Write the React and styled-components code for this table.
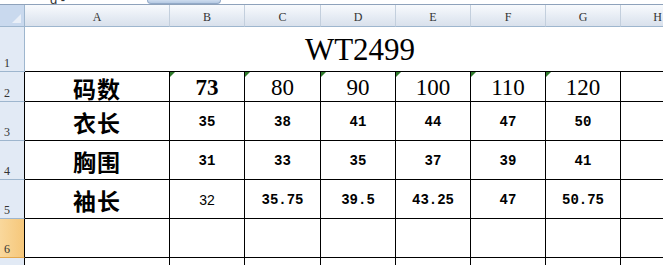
import styled, { createGlobalStyle } from 'styled-components';

const GlobalStyle = createGlobalStyle`
  html, body {
    margin: 0;
    padding: 0;
    background: #ffffff;
    overflow: hidden;
  }
`;

const columns = ['A', 'B', 'C', 'D', 'E', 'F', 'G', 'H'];
const sizes = ['73', '80', '90', '100', '110', '120'];
const rows = [
  { label: '衣长', values: ['35', '38', '41', '44', '47', '50'] },
  { label: '胸围', values: ['31', '33', '35', '37', '39', '41'] },
  { label: '袖长', values: ['32', '35.75', '39.5', '43.25', '47', '50.75'] },
];

export default function App() {
  return (
    <Window>
      <GlobalStyle />
      <TopStrip>
        <NameTail>g -</NameTail>
        <ScrollKnob />
      </TopStrip>
      <Sheet>
        <Corner />
        {columns.map((c) => (
          <ColHead key={c}>{c}</ColHead>
        ))}

        <RowHead>1</RowHead>
        <TitleCell>WT2499</TitleCell>

        <RowHead $boxed>2</RowHead>
        <LabelCell>码数</LabelCell>
        {sizes.map((s, i) => (
          <SizeCell key={s} $bold={i === 0}>
            <Flag />
            {s}
          </SizeCell>
        ))}
        <Cell />

        {rows.map((r, ri) => (
          <Row key={r.label} r={r} index={ri + 3} />
        ))}

        <RowHead $boxed $active>6</RowHead>
        {columns.map((c) => (
          <Cell key={c} />
        ))}

        {/* row 7: only its top edge is in view */}
        <RowHead $boxed />
        {columns.map((c) => (
          <Cell key={c} $open />
        ))}
      </Sheet>
    </Window>
  );
}

function Row({ r, index }) {
  return (
    <>
      <RowHead $boxed>{index}</RowHead>
      <LabelCell>{r.label}</LabelCell>
      {r.values.map((v, i) => (
        <ValueCell key={i} $plain={v === '32'}>
          {v}
        </ValueCell>
      ))}
      <Cell />
    </>
  );
}

const Window = styled.div`
  width: 663px;
  height: 265px;
  overflow: hidden;
  background: #ffffff;
`;

const TopStrip = styled.div`
  height: 5px;
  display: flex;
  align-items: flex-end;
  background: #ffffff;
  border-bottom: 1px solid #8ea2bb;
  box-sizing: border-box;
  overflow: hidden;
`;

const NameTail = styled.span`
  margin-left: 50px;
  margin-bottom: -2px;
  font: 13px 'Liberation Sans', sans-serif;
  line-height: 13px;
  color: #333;
`;

const ScrollKnob = styled.div`
  margin-left: 82px;
  align-self: flex-start;
  width: 74px;
  height: 4px;
  background: linear-gradient(#cddcef, #b6cae3);
  border: 1px solid #93aac8;
  border-top: none;
  border-radius: 0 0 5px 5px;
  box-sizing: border-box;
`;

const Sheet = styled.div`
  display: grid;
  grid-template-columns: 25px 145px 75px 76px 75px 75px 75px 75px 74px;
  grid-template-rows: 22px 45px 30px 39px 39px 39px 39px 20px;
  width: 695px;
`;

const Corner = styled.div`
  box-sizing: border-box;
  background: #c9d9ee;
  border-right: 1px solid #9eb6ce;
  border-bottom: 1px solid #9eb6ce;
  position: relative;
  &::after {
    content: '';
    position: absolute;
    right: 3px;
    bottom: 3px;
    border-style: solid;
    border-width: 0 0 9px 9px;
    border-color: transparent transparent #e9eff8 transparent;
  }
`;

const ColHead = styled.div`
  box-sizing: border-box;
  display: flex;
  align-items: center;
  justify-content: center;
  padding-top: 3px;
  background: linear-gradient(#f8fafd, #e6ecf4 55%, #d9e1ec);
  border-right: 1px solid #c3cfdd;
  border-bottom: 1px solid #9eb6ce;
  font: 12px 'Liberation Serif', serif;
  color: #333;
`;

const RowHead = styled.div`
  box-sizing: border-box;
  display: flex;
  align-items: flex-end;
  padding: 0 0 1px 4px;
  background: ${(p) =>
    p.$active ? 'linear-gradient(90deg, #f9d89c, #f6c77a)' : '#e2eaf5'};
  border-right: 1px solid ${(p) => (p.$boxed ? '#000' : '#9eb6ce')};
  border-bottom: 1px solid ${(p) => (p.$active ? '#e3a84f' : '#9eb6ce')};
  font: 12px 'Liberation Serif', serif;
  line-height: 14px;
  color: #333;
`;

const TitleCell = styled.div`
  grid-column: 2 / span 8;
  box-sizing: border-box;
  display: flex;
  align-items: center;
  justify-content: center;
  padding-top: 2px;
  border-bottom: 1px solid #000;
  font: 31px 'Liberation Serif', serif;
  color: #000;
`;

const Cell = styled.div`
  box-sizing: border-box;
  display: flex;
  align-items: center;
  justify-content: center;
  position: relative;
  border-right: 1px solid #000;
  border-bottom: ${(p) => (p.$open ? 'none' : '1px solid #000')};
  color: #000;
`;

const LabelCell = styled(Cell)`
  font: 700 23px 'Noto Sans CJK SC', sans-serif;
  letter-spacing: 1px;
  padding-top: 2px;
`;

const SizeCell = styled(Cell)`
  font: ${(p) => (p.$bold ? 700 : 400)} 23px 'Liberation Serif', serif;
  padding-top: 3px;
`;

const ValueCell = styled(Cell)`
  font: ${(p) =>
    p.$plain
      ? "400 14px 'Liberation Sans', sans-serif"
      : "700 14px 'Liberation Mono', monospace"};
  padding-top: 2px;
`;

const Flag = styled.span`
  position: absolute;
  left: 0;
  top: 0;
  border-style: solid;
  border-width: 5px 5px 0 0;
  border-color: #2f7a2a transparent transparent transparent;
`;
